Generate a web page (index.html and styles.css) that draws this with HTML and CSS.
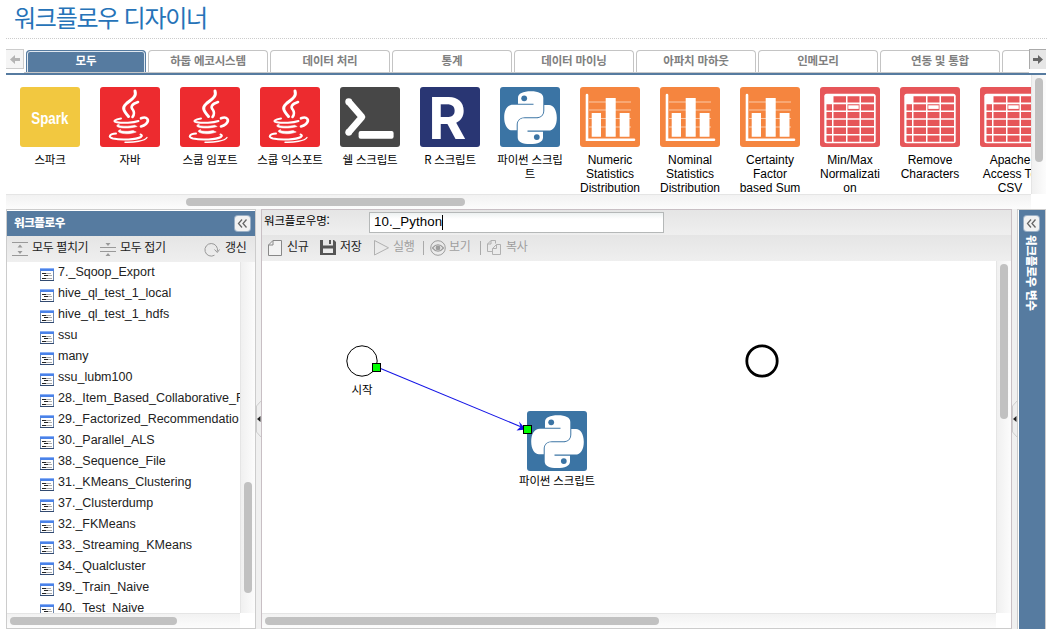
FILE: index.html
```html
<!DOCTYPE html>
<html lang="ko">
<head>
<meta charset="utf-8">
<title>워크플로우 디자이너</title>
<link rel="stylesheet" href="styles.css">
</head>
<body>
<svg class="defs" width="0" height="0">
  <symbol id="java" viewBox="0 0 60 60">
    <rect width="60" height="60" rx="3" fill="#ed2b2f"/>
    <g fill="#fff" stroke="#fff" stroke-width=".25" transform="translate(1.200 3) scale(2.220 2.130)">
      <path d="M8.851 18.56s-.917.534.653.714c1.902.218 2.874.187 4.969-.211 0 0 .552.346 1.321.646-4.699 2.013-10.633-.118-6.943-1.149M8.276 15.933s-1.028.761.542.924c2.032.209 3.636.227 6.413-.308 0 0 .384.389.987.602-5.679 1.661-12.007.13-7.942-1.218"/>
    </g>
    <g fill="none" stroke="#fff" stroke-linecap="round">
      <path d="M35 4C37 10 31 12.500 26 17C21.500 21 24 24 28.500 29.500" stroke-width="3"/>
      <path d="M38 15C32 17 30 19.500 33 23C35 26 34 28 32.500 30" stroke-width="2.600"/>
      <path d="M21 31.500C15 32.500 12 34.500 17 35.300C23 36.300 33 36 38.500 34" stroke-width="2"/>
      <path d="M41 31.300C47 29 50 33 46 37C44.500 38.300 43 39 41 39.500" stroke-width="2.600"/>
      <path d="M16 46.500C10 47 7 50 13 51.500C22 53.500 36 52.500 41 50C42.500 49 42 48 40.500 47.500" stroke-width="2"/>
      <path d="M25 55.200C34 55.500 45 54 47 50.500" stroke-width="1.400"/>
    </g>
  </symbol>
  <symbol id="python" viewBox="0 0 60 60">
    <rect width="60" height="60" rx="3" fill="#3b74a4"/>
    <path fill="#fff" d="M31 4.300C23 4.300 18 6.500 18 11V16.700H33.500V17.800H13C7 17.800 4.200 23.500 4.200 30.500C4.200 38 7.500 43.300 12 43.300H16.700V38C16.700 33 20.500 30.200 25 30.200H37C41 30.200 43.300 27.500 43.300 24V11C43.300 6.500 38.500 4.300 31 4.300Z"/>
    <circle cx="24.200" cy="11.300" r="2.900" fill="#3b74a4"/>
    <g transform="rotate(180 30.500 30.700)">
      <path fill="#fff" d="M31 4.300C23 4.300 18 6.500 18 11V16.700H33.500V17.800H13C7 17.800 4.200 23.500 4.200 30.500C4.200 38 7.500 43.300 12 43.300H16.700V38C16.700 33 20.500 30.200 25 30.200H37C41 30.200 43.300 27.500 43.300 24V11C43.300 6.500 38.500 4.300 31 4.300Z"/>
      <circle cx="24.200" cy="11.300" r="2.900" fill="#3b74a4"/>
    </g>
  </symbol>
  <symbol id="chart" viewBox="0 0 60 60">
    <rect width="60" height="60" rx="3" fill="#f5853f"/>
    <path d="M9 15H51M9 23H51M9 31.500H51M9 40H51" stroke="#fbc9a8" stroke-width="1.200"/>
    <path d="M7 8V52.700H54" fill="none" stroke="#fff" stroke-width="2.600" stroke-linecap="round"/>
    <path d="M11.700 26H21V49.700H11.700ZM25.700 11H35.700V49.700H25.700ZM39.700 26H49.500V49.700H39.700Z" fill="#fff"/>
  </symbol>
  <symbol id="table" viewBox="0 0 60 60">
    <rect width="60" height="60" rx="3" fill="#e65659"/>
    <rect x="4.300" y="6.800" width="51.400" height="49.500" rx="2.500" fill="#fff"/>
    <path fill="#e65659" d="M13.500 9.300H26v6.200H13.500zM27.500 9.300h12v6.200h-12zM41 9.300h13v6.200H41z"/>
    <g fill="#e65659">
      <path id="row" d="M6.500 17.200h5.500v6.300h-5.500zM13.500 17.200H26v6.300H13.500zM27.500 17.200h12v6.300h-12zM41 17.200h13v6.300H41z"/>
      <use href="#row" y="7.800"/><use href="#row" y="15.600"/><use href="#row" y="23.400"/><use href="#row" y="31.200"/>
    </g>
    <rect x="28.300" y="18.300" width="10.400" height="3.600" fill="#fff"/>
  </symbol>
  <symbol id="shell" viewBox="0 0 60 60">
    <rect width="60" height="60" rx="3" fill="#474747"/>
    <path d="M8.500 14.500L22 30L8.500 45.500" fill="none" stroke="#fff" stroke-width="6.500" stroke-linejoin="round"/>
    <circle cx="8.700" cy="14.700" r="3.400" fill="#fff"/><circle cx="8.700" cy="45.300" r="3.400" fill="#fff"/>
    <rect x="18.600" y="44" width="35" height="7.800" rx="2" fill="#fff"/>
  </symbol>
  <symbol id="doc" viewBox="0 0 14 13">
    <rect x=".5" y=".5" width="13" height="12" fill="#fff" stroke="#6d87ad"/>
    <rect width="14" height="3" fill="#4a82e8"/><rect width="14" height="1" fill="#8bb0f5"/>
    <path d="M2 5.500H6M4 7.500H8M2 10.500H6" stroke="#222"/><path d="M6 5.500H11M8 7.500H12M6 10.500H12" stroke="#aaa"/>
    <path d="M0 12.500H14" stroke="#324a70"/>
  </symbol>
</svg>
<header class="title"><h1>워크플로우 디자이너</h1></header>
<nav class="tabs">
  <button class="scroller left"><svg width="10" height="9"><path d="M0 4.500L5 0V3H10V6H5V9Z" fill="#b5b5b5"/></svg></button>
  <div class="tablist">
    <a class="tab active">모두</a><a class="tab">하둡 에코시스템</a><a class="tab">데이터 처리</a><a class="tab">통계</a><a class="tab">데이터 마이닝</a><a class="tab">아파치 마하웃</a><a class="tab">인메모리</a><a class="tab">연동 및 통합</a><a class="tab"></a>
  </div>
  <button class="scroller right"><svg width="10" height="9"><path d="M10 4.500L5 0V3H0V6H5V9Z" fill="#666"/></svg></button>
</nav>
<section class="palette">
  <div class="tools">
    <figure class="tool"><svg viewBox="0 0 60 60"><rect width="60" height="60" rx="3" fill="#f2c840"/><text class="spark" x="11.300" y="37.300" textLength="37" lengthAdjust="spacingAndGlyphs">Spark</text></svg><figcaption class="ko">스파크</figcaption></figure>
    <figure class="tool"><svg><use href="#java"/></svg><figcaption class="ko">자바</figcaption></figure>
    <figure class="tool"><svg><use href="#java"/></svg><figcaption class="ko">스쿱 임포트</figcaption></figure>
    <figure class="tool"><svg><use href="#java"/></svg><figcaption class="ko">스쿱 익스포트</figcaption></figure>
    <figure class="tool"><svg><use href="#shell"/></svg><figcaption class="ko">쉘 스크립트</figcaption></figure>
    <figure class="tool"><svg viewBox="0 0 60 60"><rect width="60" height="60" rx="3" fill="#293673"/><text class="rlogo" x="8.300" y="52.200">R</text></svg><figcaption class="ko">R 스크립트</figcaption></figure>
    <figure class="tool"><svg><use href="#python"/></svg><figcaption class="ko">파이썬 스크립<br>트</figcaption></figure>
    <figure class="tool"><svg><use href="#chart"/></svg><figcaption>Numeric<br>Statistics<br>Distribution</figcaption></figure>
    <figure class="tool"><svg><use href="#chart"/></svg><figcaption>Nominal<br>Statistics<br>Distribution</figcaption></figure>
    <figure class="tool"><svg><use href="#chart"/></svg><figcaption>Certainty<br>Factor<br>based Sum</figcaption></figure>
    <figure class="tool"><svg><use href="#table"/></svg><figcaption>Min/Max<br>Normalizati<br>on</figcaption></figure>
    <figure class="tool"><svg><use href="#table"/></svg><figcaption>Remove<br>Characters</figcaption></figure>
    <figure class="tool"><svg><use href="#table"/></svg><figcaption>Apache<br>Access To<br>CSV</figcaption></figure>
  </div>
  <div class="vbar palette-v"><i></i></div>
  <div class="hbar palette-h"><i></i></div>
</section>
<main class="work">
  <aside class="side">
    <div class="head"><b>워크플로우</b><span class="fold"><svg width="11" height="9"><path d="M5 .5L1.500 4.500L5 8.500M9.500 .5L6 4.500L9.500 8.500" fill="none" stroke="#666" stroke-width="1.300"/></svg></span></div>
    <div class="bar side-bar">
      <svg width="16" height="15"><path d="M0 .5H16M0 13.500H16" stroke="#999"/><path d="M5.500 5.500L8 2.500L10.500 5.500ZM5.500 9L8 12L10.500 9Z" fill="#999"/></svg><span class="expand">모두 펼치기</span>
      <svg width="16" height="15"><path d="M0 5.500H16M0 9.500H16" stroke="#999"/><path d="M5.500 1L8 4L10.500 1ZM5.500 14L8 11L10.500 14Z" fill="#999"/></svg><span class="collapse">모두 접기</span>
      <svg width="17" height="15"><path d="M10.500 13.200A6.300 6.300 0 1 1 13.300 9.500" fill="none" stroke="#999"/><path d="M10.500 7.500L13.300 10.500L15.500 7.500" fill="none" stroke="#999"/></svg><span>갱신</span>
    </div>
    <div class="split">
      <ul class="tree">
        <li><svg><use href="#doc"/></svg>7._Sqoop_Export</li>
        <li><svg><use href="#doc"/></svg>hive_ql_test_1_local</li>
        <li><svg><use href="#doc"/></svg>hive_ql_test_1_hdfs</li>
        <li><svg><use href="#doc"/></svg>ssu</li>
        <li><svg><use href="#doc"/></svg>many</li>
        <li><svg><use href="#doc"/></svg>ssu_lubm100</li>
        <li><svg><use href="#doc"/></svg>28._Item_Based_Collaborative_F</li>
        <li><svg><use href="#doc"/></svg>29._Factorized_Recommendatio</li>
        <li><svg><use href="#doc"/></svg>30._Parallel_ALS</li>
        <li><svg><use href="#doc"/></svg>38._Sequence_File</li>
        <li><svg><use href="#doc"/></svg>31._KMeans_Clustering</li>
        <li><svg><use href="#doc"/></svg>37._Clusterdump</li>
        <li><svg><use href="#doc"/></svg>32._FKMeans</li>
        <li><svg><use href="#doc"/></svg>33._Streaming_KMeans</li>
        <li><svg><use href="#doc"/></svg>34._Qualcluster</li>
        <li><svg><use href="#doc"/></svg>39._Train_Naive</li>
        <li><svg><use href="#doc"/></svg>40._Test_Naive</li>
      </ul>
      <div class="vbar side-v"><i></i></div>
      <div class="hbar side-h"><i></i></div>
    </div>
  </aside>
  <div class="gutter"><svg width="5" height="36"><path d="M5 0L.5 5V31L5 36" fill="#eee" stroke="#ccc"/><path d="M4.500 15V21L1 18Z" fill="#222"/></svg></div>
  <section class="editor">
    <div class="form"><label>워크플로우명:</label><div class="field">10._Python<i></i></div></div>
    <div class="bar edit-bar">
      <svg width="15" height="16"><path d="M5 .5H13.500V15.500H.5V5ZM5 .5V5H.5" fill="#f3f3f3" stroke="#888"/></svg><span class="b1">신규</span>
      <svg width="16" height="16"><path d="M0 0H3V5.500H13V0H14L16 2V15H0ZM3 8.500V13H13V8.500Z" fill="#555" fill-rule="evenodd"/><path d="M9 0H11V4H9Z" fill="#555"/></svg><span class="b2">저장</span>
      <svg class="off" width="16" height="16"><path d="M.5 .5V15L14.500 7.800Z" fill="none" stroke="#555"/></svg><span class="b3 off">실행</span><hr>
      <svg class="off" width="16" height="16"><circle cx="8" cy="8" r="7.300" fill="none" stroke="#222"/><path d="M2.500 8Q8 1.500 13.500 8Q8 14.500 2.500 8Z" fill="none" stroke="#222" stroke-width="1.200"/><circle cx="8" cy="8" r="2.400" fill="#222"/></svg><span class="b4 off">보기</span><hr>
      <svg class="off" width="15" height="16"><path d="M5.500 11.500H.5V4L4 .5H8.500V3.500M4 .5V4H.5M9.500 4.500H13.500V14.500H5.500V8.500ZM9.500 4.500V8.500H5.500" fill="none" stroke="#555"/></svg><span class="off">복사</span>
    </div>
    <div class="split">
      <svg class="canvas" width="734" height="352" viewBox="262 261 734 352">
        <circle cx="362" cy="361" r="15.200" fill="#fff" stroke="#000"/>
        <circle cx="762" cy="361" r="15.200" fill="#fff" stroke="#000" stroke-width="2.800"/>
        <path d="M377 367L525 428.500" stroke="#1414e6" stroke-width="1.100"/>
        <path d="M526 429.500L519 421.500L520.500 426.800L516.500 430.500Z" fill="#1414e6"/>
        <use href="#python" x="527" y="411" width="60" height="60"/>
        <rect x="372.500" y="363.500" width="8" height="8" fill="#0f0" stroke="#000"/>
        <rect x="523.500" y="425.500" width="8" height="8" fill="#0f0" stroke="#000"/>
        <text x="362" y="394" text-anchor="middle">시작</text>
        <text x="557" y="485" text-anchor="middle">파이썬 스크립트</text>
      </svg>
      <div class="vbar edit-v"><i></i></div>
      <div class="hbar edit-h"><i></i></div>
    </div>
  </section>
  <div class="gutter"><svg width="5" height="36"><path d="M5 0L.5 5V31L5 36" fill="#eee" stroke="#ccc"/><path d="M4.500 15V21L1 18Z" fill="#222"/></svg></div>
  <aside class="vars"><span class="fold"><svg width="11" height="9"><path d="M5 .5L1.500 4.500L5 8.500M9.500 .5L6 4.500L9.500 8.500" fill="none" stroke="#666" stroke-width="1.300"/></svg></span><b>워크플로우 변수</b></aside>
</main>
</body>
</html>
```
FILE: styles.css
```css
* { box-sizing: border-box; }
body { margin: 0; width: 1047px; height: 630px; overflow: hidden; background: #fff; color: #000; font: 12px/14px "Liberation Sans", "Noto Sans CJK KR", sans-serif; display: flex; flex-direction: column; }
.defs { position: absolute; }
svg { display: block; flex: none; }
.title { height: 39px; margin-left: 6px; padding-left: 8px; border-bottom: 1px dotted #ccc; flex: none; }
.title h1 { margin: 0; font: 400 24px/33px "Noto Sans CJK KR", sans-serif; letter-spacing: -1.250px; color: #2673b8; white-space: nowrap; }
.tabs { height: 36px; margin: 0 1px 0 6px; padding-top: 10px; display: flex; border-bottom: 2px solid #567ba0; flex: none; }
.scroller { width: 18px; height: 20px; padding: 0; border: 1px solid #ccc; border-left: 0; background: #f5f5f5; display: flex; align-items: center; justify-content: center; flex: none; }
.scroller.right { width: 17px; background: #e6e6e6; border: 1px solid #aaa; border-width: 1px 0 0 1px; }
.tablist { flex: 1; display: flex; gap: 2px; padding: 1px 0 0 2px; overflow: hidden; border-bottom: 1px solid #c8c8c8; }
.tab { flex: none; width: 120px; height: 23px; border: 1px solid #c4c4c4; border-bottom: 0; border-radius: 4px 4px 0 0; text-align: center; color: #808080; font: 700 11.5px/18px "Noto Sans CJK KR", sans-serif; letter-spacing: -.2px; }
.tab.active { background: #567ba0; color: #fff; border-color: #567ba0; box-shadow: inset 0 0 0 1px #dfe7ef; }
.palette { height: 134px; margin: 0 1px 0 6px; display: grid; grid-template: 119px 15px / 1025px 15px; flex: none; }
.tools { display: flex; gap: 20px; padding: 12px 0 0 14px; overflow: hidden; }
.tool { margin: 0; width: 60px; flex: none; display: flex; flex-direction: column; align-items: center; text-align: center; white-space: nowrap; }
.tool svg { width: 60px; height: 60px; margin-bottom: 6px; }
.tool .ko { font-family: "Noto Sans CJK KR", sans-serif; font-size: 11.5px; letter-spacing: -.2px; margin-top: -1px; }
.spark { font: 700 17px "Liberation Sans", sans-serif; fill: #fff; }
.rlogo { font: 700 58px "Inter", sans-serif; fill: #fff; }
.vbar { background: linear-gradient(90deg, #f0f0f0, #fcfcfc); border-left: 1px solid #e5e5e5; }
.hbar { background: linear-gradient(#f2f2f2, #fcfcfc); border-top: 1px solid #e5e5e5; }
.vbar i, .hbar i { display: block; background: #c1c1c1; border-radius: 4px; }
.hbar i { height: 8px; margin-top: 3px; }
.vbar i { width: 8px; margin-left: 3px; }
.palette-v i { height: 84px; margin-top: 3px; }
.palette-h i { width: 279px; margin-left: 180px; }
.work { flex: none; margin: 0 1px 1px 6px; display: grid; grid-template: 420px / 250px 5px 751px 5px 29px; }
.side, .editor { border: 1px solid #ccc; display: flex; flex-direction: column; min-width: 0; min-height: 0; }
.side .head { height: 25px; margin-top: 1px; background: #567ba0; color: #fff; display: flex; align-items: center; justify-content: space-between; padding: 0 5px 3px 7px; font: 900 11.5px/20px "Noto Sans CJK KR", sans-serif; letter-spacing: -.4px; flex: none; }
.side .fold { margin-top: 3px; }
.fold { width: 15px; height: 15px; background: #f2f2f2; border-radius: 3px; box-shadow: 0 0 0 1px #9bb0c6; display: flex; align-items: center; justify-content: center; flex: none; }
.bar { height: 26px; background: linear-gradient(#e5e5e5, #efefef); display: flex; align-items: center; font: 12px/20px "Noto Sans CJK KR", sans-serif; letter-spacing: -.4px; flex: none; white-space: nowrap; color: #222; }
.bar span { padding-bottom: 4px; }
.side-bar { padding-left: 5px; }
.side-bar span { margin-left: 4px; }
.expand { width: 68px; }
.collapse { width: 84px; }
.split { display: grid; grid-template: 351px 15px / 233px 15px; min-width: 0; }
.tree { list-style: none; margin: 0; padding: 0 0 0 33px; overflow: hidden; min-width: 0; min-height: 0; height: 351px; }
.tree li { height: 21px; display: flex; gap: 4px; font-size: 12.5px; line-height: 20px; white-space: nowrap; color: #222; }
.tree svg { width: 14px; height: 13px; margin-top: 6px; }
.side-v i { height: 111px; margin-top: 220px; }
.side-h i { width: 167px; margin-left: 3px; }
.gutter { background: #f0f0f0; display: flex; align-items: center; }
.editor { border-color: #c8bfc4; border-bottom-color: #ccc; }
.form { height: 25px; background: linear-gradient(#e5e5e5, #efefef); display: flex; padding-left: 2px; flex: none; }
.form label { width: 105px; font: 11.5px/21px "Noto Sans CJK KR", sans-serif; letter-spacing: -.15px; }
.field { width: 295px; height: 21px; margin-top: 2px; padding-left: 4px; border: 1px solid #b5b8b8; background: linear-gradient(#edf1f1, #fff 6px); font-size: 13.300px; line-height: 17px; letter-spacing: .1px; display: flex; }
.field i { width: 1px; height: 15px; margin-top: 2px; background: #000; }
.edit-bar { padding-left: 6px; }
.edit-bar span { margin-left: 4px; }
.edit-bar hr { width: 1px; height: 14px; margin: 0 6px 0 0; border: 0; background: #aaa; flex: none; }
.b1 { width: 33px; }
.b2 { width: 34px; }
.edit-bar .b3 { width: 30px; margin-left: 3px; }
.edit-bar .b4 { width: 31px; margin-left: 3px; }
.off { opacity: .38; }
.editor .split { grid-template: 352px 15px / 734px 15px; }
.canvas text { font: 11.5px "Noto Sans CJK KR", sans-serif; letter-spacing: -.15px; }
.edit-v i { height: 155px; margin-top: 3px; }
.edit-h i { width: 394px; margin-left: 3px; }
.vars { background: #567ba0; border: 1px solid #ccc; border-width: 1px 1px 0 1px; box-shadow: inset 1px 0 #fff; display: flex; flex-direction: column; align-items: center; padding-top: 6px; color: #fff; }
.vars b { writing-mode: vertical-rl; text-orientation: sideways; margin-top: 4px; font: 900 11.5px/16px "Noto Sans CJK KR", sans-serif; letter-spacing: -.2px; }
```
